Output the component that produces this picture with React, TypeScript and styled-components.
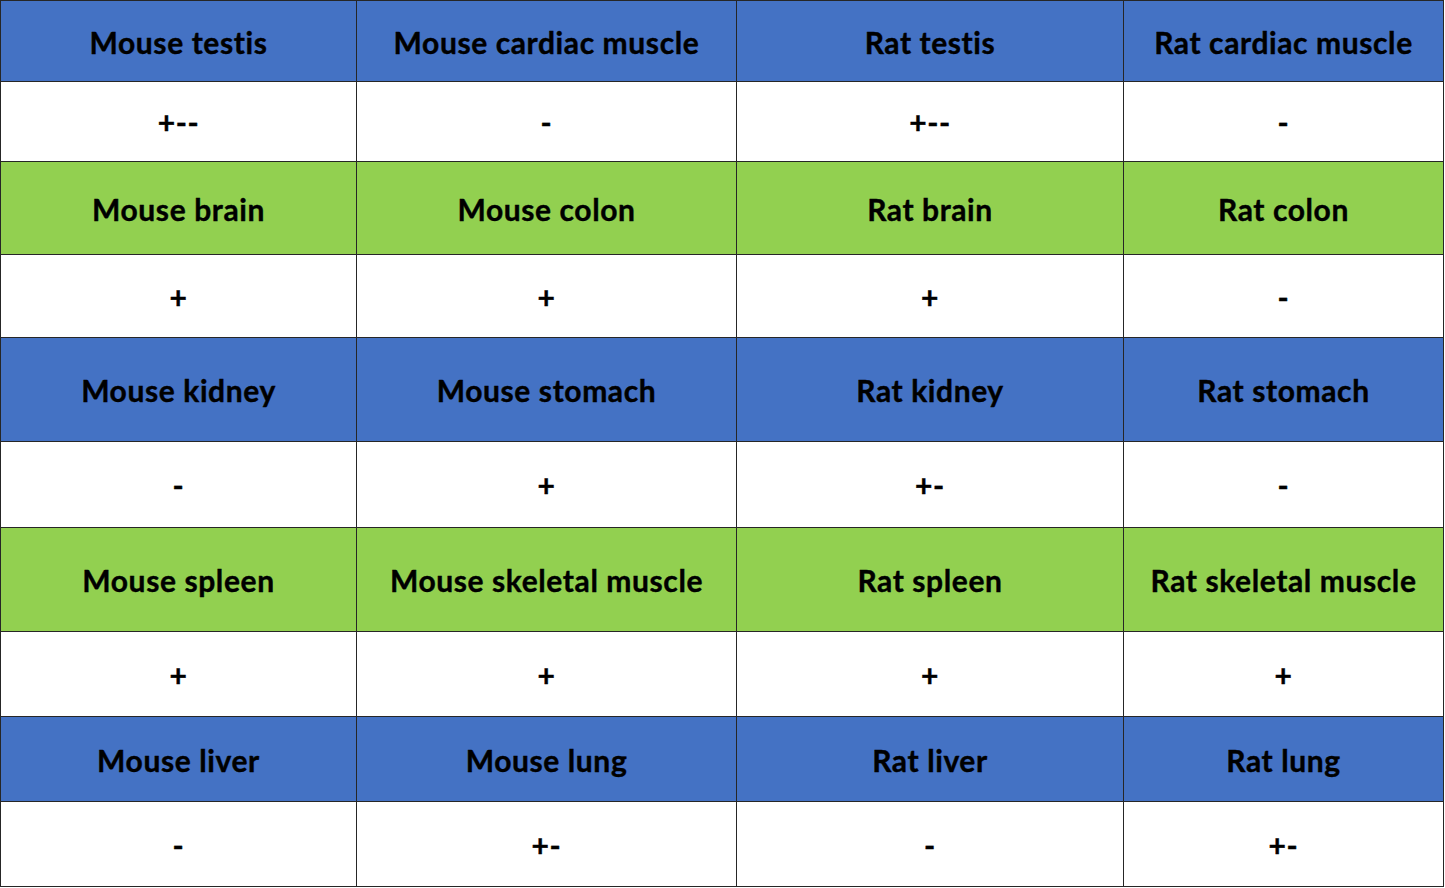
import React from "react";
import styled, { createGlobalStyle } from "styled-components";

const Global = createGlobalStyle`
  html, body { margin: 0; padding: 0; background: #ffffff; }
  body { font-family: Lato, "Open Sans", "Liberation Sans", sans-serif; }
`;

const Grid = styled.div`
  display: grid;
  grid-template-columns: 355px 379px 386px 319px;
  grid-template-rows: 80px 79px 92px 82px 103px 85px 103px 84px 84px 84px;
  gap: 1px;
  padding: 1px;
  width: 1444px;
  box-sizing: border-box;
  background: #262626;
`;

type Tone = "blue" | "green" | "white";

const toneColor: Record<Tone, string> = {
  blue: "#4472c4",
  green: "#92d050",
  white: "#ffffff",
};

const Cell = styled.div<{ $tone: Tone }>`
  display: flex;
  align-items: center;
  justify-content: center;
  padding-top: 1px;
  box-sizing: border-box;
  background: ${(p) => toneColor[p.$tone]};
  color: #000000;
  font-family: Lato, "Open Sans", "Liberation Sans", sans-serif;
  font-weight: 700;
  font-size: 30px;
  letter-spacing: 0.6px;
  white-space: nowrap;
  -webkit-text-stroke: 0.4px #000000;
`;

const rows: { tone: Tone; cells: string[] }[] = [
  { tone: "blue", cells: ["Mouse testis", "Mouse cardiac muscle", "Rat testis", "Rat cardiac muscle"] },
  { tone: "white", cells: ["+--", "-", "+--", "-"] },
  { tone: "green", cells: ["Mouse brain", "Mouse colon", "Rat brain", "Rat colon"] },
  { tone: "white", cells: ["+", "+", "+", "-"] },
  { tone: "blue", cells: ["Mouse kidney", "Mouse stomach", "Rat kidney", "Rat stomach"] },
  { tone: "white", cells: ["-", "+", "+-", "-"] },
  { tone: "green", cells: ["Mouse spleen", "Mouse skeletal muscle", "Rat spleen", "Rat skeletal muscle"] },
  { tone: "white", cells: ["+", "+", "+", "+"] },
  { tone: "blue", cells: ["Mouse liver", "Mouse lung", "Rat liver", "Rat lung"] },
  { tone: "white", cells: ["-", "+-", "-", "+-"] },
];

export default function App() {
  return (
    <>
      <Global />
      <Grid>
        {rows.map((r, i) =>
          r.cells.map((c, j) => (
            <Cell key={`${i}-${j}`} $tone={r.tone}>
              {c}
            </Cell>
          ))
        )}
      </Grid>
    </>
  );
}
